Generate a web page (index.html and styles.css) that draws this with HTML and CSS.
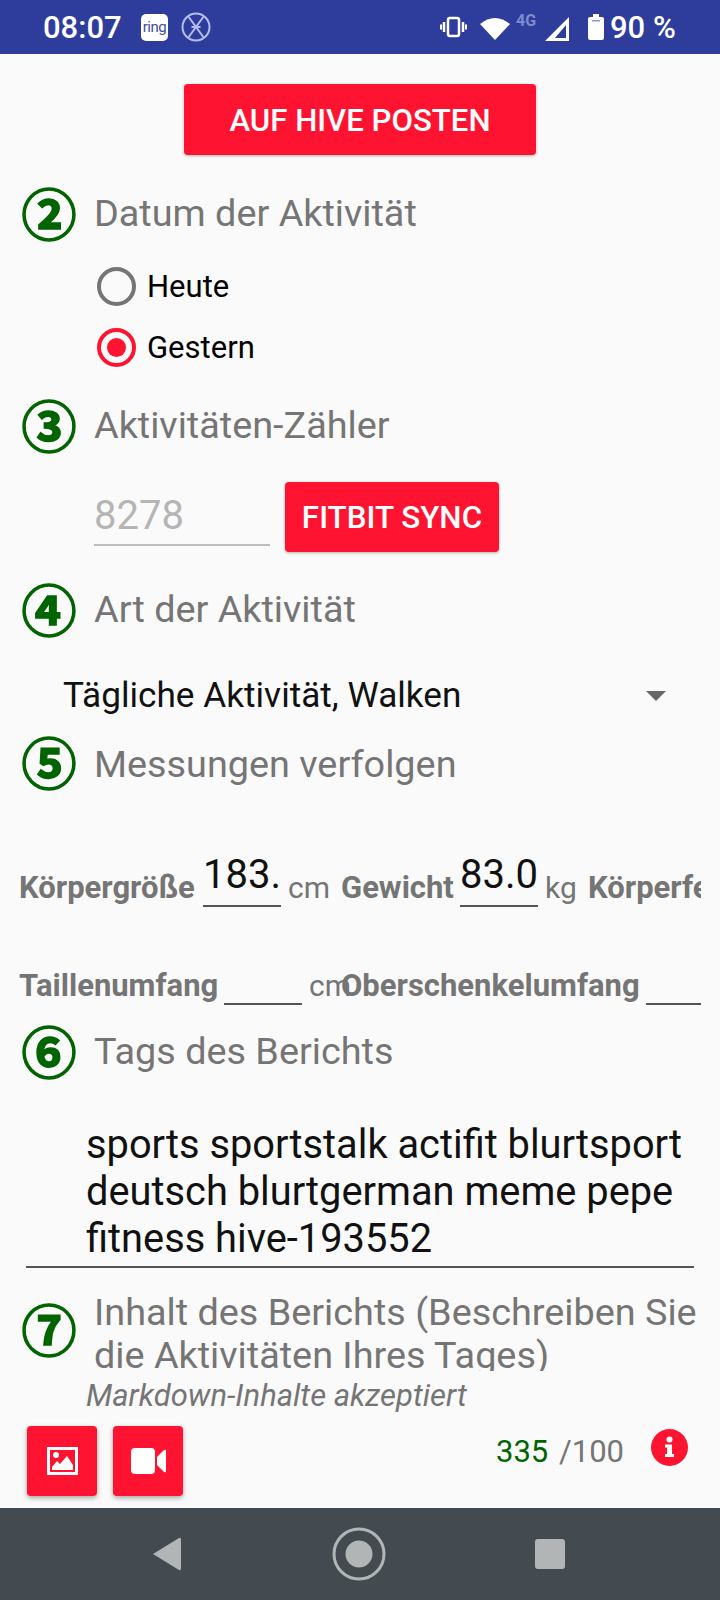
FILE: index.html
```html
<!DOCTYPE html>
<html lang="de">
  <head>
    <meta charset="UTF-8" />
    <meta name="viewport" content="width=device-width, initial-scale=1.0" />
    <title>Aktivität posten</title>
    <link rel="stylesheet" href="styles.css">
  </head>

  <body>
    <div class="status-bar">
      <span class="time">08:07</span>
      <span class="ring-icon">ring</span>
      <svg class="x-icon" width="30" height="30" viewBox="0 0 30 30">
        <circle cx="15" cy="15" r="13.5" fill="none" stroke="#b4bdf0" stroke-width="2" />
        <path d="M7 4 L23 26 M23 4 L7 26 M10.5 15 L19.5 15" fill="none" stroke="#b4bdf0" stroke-width="2" />
      </svg>
      <span class="status-gap"></span>
      <svg class="vibrate-icon" width="27" height="22" viewBox="0 0 27 22">
        <rect x="8" y="2" width="11" height="18" rx="2" fill="none" stroke="#fff" stroke-width="2.5" />
        <path d="M4 6 V16 M23 6 V16" stroke="#fff" stroke-width="2.5" />
        <path d="M1 8.5 V13.5 M26 8.5 V13.5" stroke="#fff" stroke-width="2" />
      </svg>
      <svg class="wifi-icon" width="30" height="23" viewBox="0 0 30 23">
        <path d="M0 7 Q15 -5 30 7 L15 23 Z" fill="#fff" />
      </svg>
      <span class="net-label">4G</span>
      <svg class="signal-icon" width="25" height="24" viewBox="0 0 25 24">
        <path d="M24 0 V24 H0 Z M21 8 L10 21 H21 Z" fill="#fff" fill-rule="evenodd" />
      </svg>
      <svg class="battery-icon" width="16" height="26" viewBox="0 0 16 26">
        <path d="M5 0 H11 V3 H14 Q16 3 16 5 V24 Q16 26 14 26 H2 Q0 26 0 24 V5 Q0 3 2 3 H5 Z" fill="#fff" />
        <rect x="4" y="6" width="8" height="1.5" fill="#8d97cf" />
      </svg>
      <span class="battery-text">90 %</span>
    </div>

    <div class="content">
      <button type="button" class="red-btn post-btn">AUF HIVE POSTEN</button>

      <div class="step step-date">
        <span class="step-num">②</span>
        <span class="step-title">Datum der Aktivität</span>
      </div>
      <div class="radio-group">
        <div class="radio-row"><span class="radio"></span><span class="radio-label">Heute</span></div>
        <div class="radio-row"><span class="radio checked"></span><span class="radio-label">Gestern</span></div>
      </div>

      <div class="step step-count">
        <span class="step-num">③</span>
        <span class="step-title">Aktivitäten-Zähler</span>
      </div>
      <div class="sync-row">
        <div class="count-input">8278</div>
        <button type="button" class="red-btn sync-btn">FITBIT SYNC</button>
      </div>

      <div class="step step-type">
        <span class="step-num">④</span>
        <span class="step-title">Art der Aktivität</span>
      </div>
      <div class="select-row">
        <span class="select-text">Tägliche Aktivität, Walken</span>
        <span class="select-arrow"></span>
      </div>

      <div class="step step-measure">
        <span class="step-num">⑤</span>
        <span class="step-title">Messungen verfolgen</span>
      </div>
      <div class="measures">
        <div class="measure-row">
          <span class="m-label w-height">Körpergröße</span>
          <span class="m-input">183.</span>
          <span class="m-unit w-cm">cm</span>
          <span class="m-label w-weight">Gewicht</span>
          <span class="m-input">83.0</span>
          <span class="m-unit w-kg">kg</span>
          <span class="m-label">Körperfett</span>
        </div>
        <div class="measure-row">
          <span class="m-label w-waist">Taillenumfang</span>
          <span class="m-input"></span>
          <span class="m-unit w-cm2">cm</span>
          <span class="m-label w-thigh">Oberschenkelumfang</span>
          <span class="m-input"></span>
        </div>
      </div>

      <div class="step step-tags">
        <span class="step-num">⑥</span>
        <span class="step-title">Tags des Berichts</span>
      </div>
      <div class="tags-box">sports sportstalk actifit blurtsport deutsch blurtgerman meme pepe fitness hive-193552</div>

      <div class="step step-body">
        <span class="step-num">⑦</span>
        <span class="step-title step-title-long">Inhalt des Berichts (Beschreiben Sie die Aktivitäten Ihres Tages)</span>
      </div>
      <div class="markdown-note">Markdown-Inhalte akzeptiert</div>

      <div class="bottom-row">
        <button type="button" class="red-btn icon-btn">
          <svg width="31" height="28" viewBox="0 0 31 28">
            <path d="M0 0 H31 V28 H0 Z M3 3 V25 H28 V3 Z" fill="#fff" fill-rule="evenodd" />
            <path d="M5 23 V20 L10 14 L13 17 L20 9 L26 18 V23 Z" fill="#fff" />
            <circle cx="9" cy="8" r="3" fill="#fff" />
          </svg>
        </button>
        <button type="button" class="red-btn icon-btn">
          <svg width="35" height="26" viewBox="0 0 35 26">
            <rect x="0" y="0" width="24" height="26" rx="4" fill="#fff" />
            <path d="M26 9 L33 2 Q35 1 35 3 V23 Q35 25 33 24 L26 17 Z" fill="#fff" />
          </svg>
        </button>
        <span class="counter">
          <span class="counter-value">335</span>
          <span class="counter-max">/100</span>
        </span>
        <svg class="info-icon" width="37" height="37" viewBox="0 0 37 37">
          <circle cx="18.5" cy="18.5" r="18.5" fill="#fe1430" />
          <circle cx="18.5" cy="10.5" r="3" fill="#fff" />
          <path d="M14 15.5 H21 V25 H23 V28 H14 V25 H16 V18.5 H14 Z" fill="#fff" />
        </svg>
      </div>
    </div>

    <div class="nav-bar">
      <svg width="30" height="34" viewBox="0 0 30 34">
        <path d="M27 1 Q29 0 29 3 V31 Q29 34 27 33 L1 17 Z" fill="#b1b5b6" />
      </svg>
      <svg width="54" height="54" viewBox="0 0 54 54">
        <circle cx="27" cy="27" r="25" fill="none" stroke="#b1b5b6" stroke-width="3" />
        <circle cx="27" cy="27" r="13.5" fill="#b1b5b6" />
      </svg>
      <span class="nav-square"></span>
    </div>
  </body>
</html>
```

FILE: styles.css
```css
* {
  box-sizing: border-box;
}

body {
  font-family: Roboto, "Liberation Sans", sans-serif;
  margin: 0;
  width: 720px;
  height: 1600px;
  display: flex;
  flex-direction: column;
  overflow: hidden;
  background-color: #fafafa;
}

/* status bar */
.status-bar {
  height: 54px;
  flex: none;
  display: flex;
  align-items: center;
  padding-left: 43px;
  background-color: #2e3d9c;
  color: #fff;
}

.time {
  font-size: 31px;
  font-weight: 500;
  width: 98px;
}

.ring-icon {
  width: 27px;
  height: 27px;
  border-radius: 5px;
  background-color: #fff;
  color: #3f4ea5;
  font-size: 15px;
  line-height: 26px;
  text-align: center;
  letter-spacing: -0.5px;
}

.x-icon {
  margin-left: 13px;
}

.status-gap {
  width: 229px;
}

.wifi-icon {
  margin-left: 13px;
  margin-top: 3px;
}

.net-label {
  font-size: 16px;
  font-weight: 700;
  color: #7f8ccc;
  margin-left: 6px;
  margin-bottom: 14px;
  width: 26px;
}

.signal-icon {
  margin-left: 3px;
  margin-top: 3px;
}

.battery-icon {
  margin-left: 18px;
}

.battery-text {
  font-size: 31px;
  font-weight: 500;
  margin-left: 6px;
}

/* form */
.content {
  flex: 1;
  min-height: 0;
}

.red-btn {
  display: block;
  border: none;
  padding: 0;
  border-radius: 4px;
  background-color: #fe1430;
  color: #fff;
  font-family: inherit;
  font-weight: 500;
  box-shadow: 0 1px 3px rgba(0, 0, 0, 0.3);
}

.post-btn {
  width: 352px;
  height: 71px;
  margin: 30px 0 0 184px;
  padding-top: 2px;
  font-size: 31.2px;
}

.step {
  display: flex;
  align-items: center;
  padding-left: 22px;
  height: 54px;
}

.step-num {
  width: 54px;
  height: 54px;
  margin-right: 18px;
  flex: none;
  font-family: "Noto Sans CJK SC", sans-serif;
  font-weight: 700;
  font-size: 55px;
  line-height: 44px;
  color: #006400;
  display: flex;
  justify-content: center;
  -webkit-text-stroke: 1.5px #006400;
}

.step-title {
  font-size: 37.8px;
  color: #757575;
  padding-bottom: 6px;
}

.step-date {
  margin-top: 34px;
}

.radio-group {
  margin: 13px 0 0 97px;
}

.radio-row {
  height: 61px;
  display: flex;
  align-items: center;
}

.radio {
  width: 39px;
  height: 39px;
  border: 4px solid #757575;
  border-radius: 50%;
  margin-right: 11px;
  display: flex;
  align-items: center;
  justify-content: center;
}

.radio.checked {
  border-color: #fe1430;
}

.radio.checked::after {
  content: "";
  width: 19px;
  height: 19px;
  border-radius: 50%;
  background-color: #fe1430;
}

.radio-label {
  font-size: 31px;
  color: #000;
}

.step-count {
  margin-top: 23px;
}

.sync-row {
  margin: 27px 0 0 94px;
  display: flex;
}

.count-input {
  width: 176px;
  height: 64px;
  margin-right: 15px;
  border-bottom: 2px solid #bdbdbd;
  font-size: 40px;
  line-height: 68px;
  color: #b5b5b5;
}

.sync-btn {
  width: 214px;
  height: 70px;
  font-size: 31.4px;
}

.step-type {
  margin-top: 33px;
}

.select-row {
  height: 70px;
  margin-top: 22px;
  padding: 0 44px 0 63px;
  display: flex;
  align-items: center;
  justify-content: space-between;
}

.select-text {
  font-size: 35.2px;
  padding-bottom: 2px;
  color: #111;
}

.select-arrow {
  width: 0;
  height: 0;
  border-left: 10px solid transparent;
  border-right: 10px solid transparent;
  border-top: 10px solid #666;
  margin-right: 10px;
}

.step-measure {
  margin-top: 7px;
}

.step-measure .step-title {
  padding-bottom: 2px;
}

.measures {
  width: 682px;
  margin: 60px 0 0 19px;
  overflow: hidden;
  display: flex;
  flex-direction: column;
  gap: 41px;
}

.measure-row {
  height: 57px;
  display: flex;
  align-items: flex-start;
  white-space: nowrap;
}

.m-label {
  font-size: 31px;
  font-weight: 700;
  color: #757575;
  flex: none;
  margin-top: 17px;
}

.m-unit {
  font-size: 30px;
  color: #757575;
  flex: none;
  margin-top: 18px;
}

.m-input {
  width: 78px;
  height: 55px;
  flex: none;
  border-bottom: 2px solid #555;
  font-size: 40px;
  line-height: 46px;
  color: #111;
  text-align: center;
  overflow: hidden;
}

.w-height {
  width: 184px;
}

.w-cm {
  width: 60px;
  padding-left: 7px;
}

.w-weight {
  width: 119px;
}

.w-kg {
  width: 50px;
  padding-left: 7px;
}

.w-waist {
  width: 205px;
}

.w-cm2 {
  width: 39px;
  padding-left: 7px;
}

.w-thigh {
  width: 305px;
}

.step-tags {
  margin-top: 20px;
}

.tags-box {
  margin: 40px 26px 0 26px;
  padding: 0 0 4px 60px;
  border-bottom: 2px solid #555;
  font-size: 39.8px;
  line-height: 47px;
  color: #111;
}

.step-body {
  margin-top: 23px;
  height: 82px;
}

.step-title-long {
  display: block;
  align-self: flex-start;
  height: 80px;
  overflow: hidden;
  padding: 0;
  line-height: 43px;
}

.markdown-note {
  height: 46px;
  margin-left: 86px;
  font-size: 31px;
  font-style: italic;
  line-height: 46px;
  color: #757575;
}

.bottom-row {
  margin-top: 7px;
  padding: 0 32px 0 27px;
  display: flex;
  align-items: flex-start;
  gap: 16px;
}

.icon-btn {
  width: 70px;
  height: 70px;
  display: flex;
  align-items: center;
  justify-content: center;
  box-shadow: 0 2px 5px rgba(0, 0, 0, 0.35);
}

.counter {
  margin-left: auto;
  margin-top: 6px;
  font-size: 31px;
  line-height: 40px;
  white-space: nowrap;
}

.counter-value {
  color: #006400;
}

.counter-max {
  color: #757575;
  margin-left: 3px;
}

.info-icon {
  margin: 3px 0 0 11px;
}

/* android nav */
.nav-bar {
  height: 92px;
  flex: none;
  display: flex;
  align-items: center;
  justify-content: space-between;
  padding: 0 155px 0 152px;
  background-color: #434b50;
}

.nav-square {
  width: 30px;
  height: 30px;
  border-radius: 3px;
  background-color: #b1b5b6;
}
```
